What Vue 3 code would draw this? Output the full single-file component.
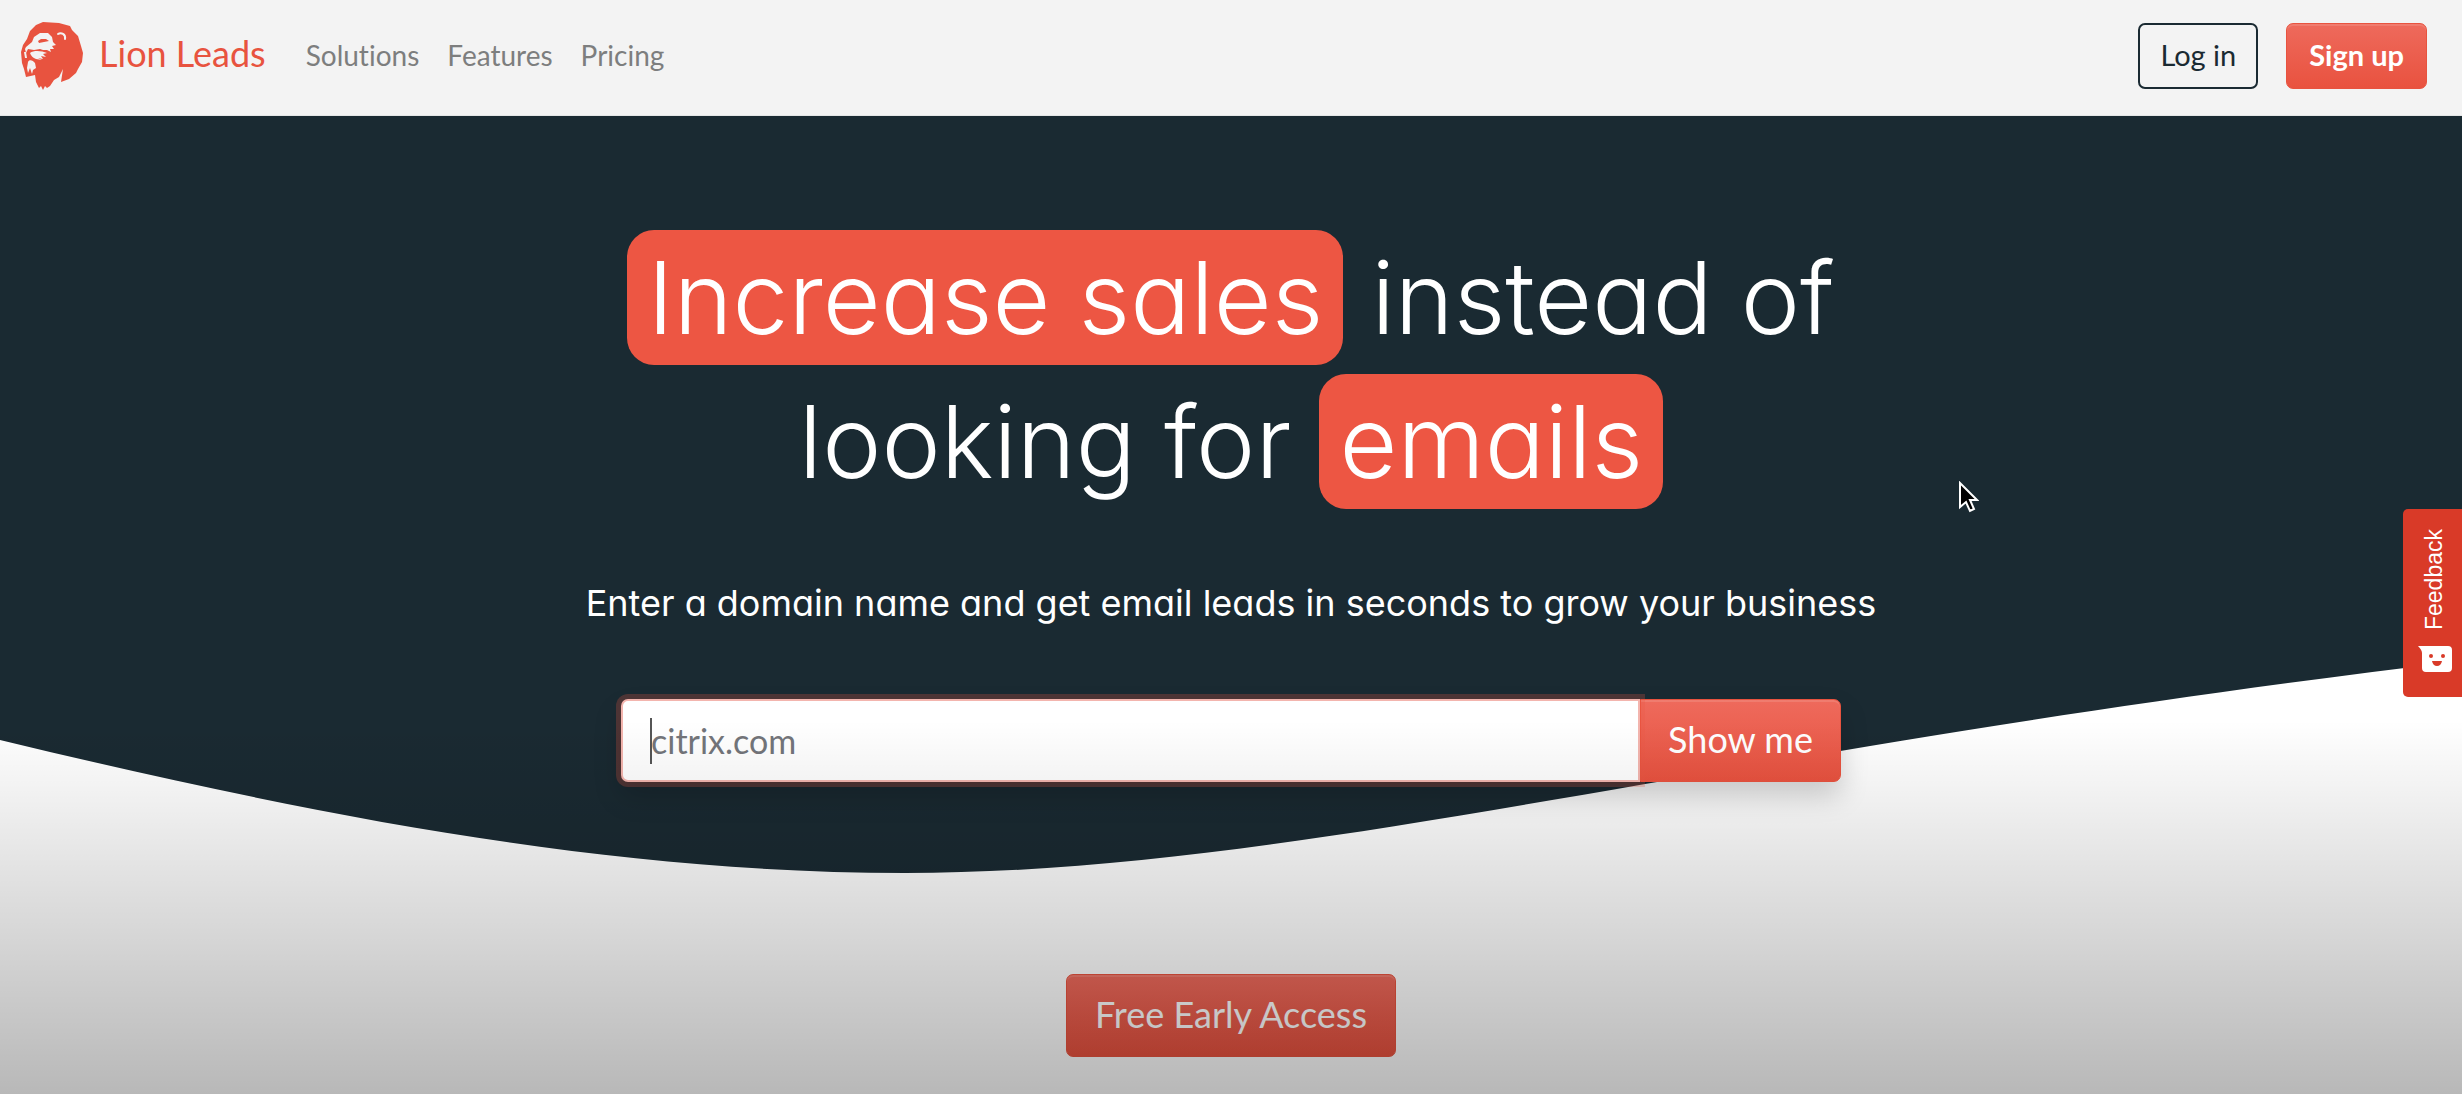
<script setup>
import { ref } from 'vue'

const domain = ref('')
const links = ['Solutions', 'Features', 'Pricing']
</script>

<template>
  <div class="page">
    <header class="navbar">
      <a class="brand" href="#">
        <svg class="brand-mark" viewBox="0 0 62 68" aria-hidden="true">
          <path fill="#e8533f" d="M15 3 22 0 38 1 49 4 51 8 57 14 60 24 62 31 61 40 57 47 55 51 48 57 40 60 42 47 38 55 33 58 29 64 26 66 24 64 22 68 20 64 18 66 15 60 14 53 5 55 3 47 1 41 0 30 2 23 6 17 9 9Z" />
          <path fill="#f3f3f3" d="M5 25 11 20 13 15 19 11 27 11 31 15 32 20 35 23 31 24 33 27 29 27 30 30 26 28 22 28 19 27 13 28 7 27 5 31 4 27Z" />
          <path fill="#f3f3f3" d="M9 31C13 28 21 29 26 31L22 32 25 35 20 34 22 37 17 36 21 38 15 37C12 36 10 34 9 31ZM3 30 5 30 6 36 4 36ZM7 40C8 37 12 38 14 41L15 46 12 48 11 52 9 46 7 51 6 46Z" />
          <path fill="#e8533f" d="M17 19 20 17 25 17 28 19 23 20 18 21Z" />
          <path fill="none" stroke="#f3f3f3" stroke-width="2" stroke-linecap="round" d="M37 12C40 10 45 12 44 17" />
        </svg>
        <span>Lion Leads</span>
      </a>
      <nav class="links">
        <a v-for="link in links" :key="link" href="#">{{ link }}</a>
      </nav>
      <div class="account">
        <button class="btn btn-outline" type="button">Log in</button>
        <button class="btn btn-red btn-strong" type="button">Sign up</button>
      </div>
    </header>

    <main class="hero">
      <svg class="wave" viewBox="0 0 2462 757" preserveAspectRatio="none" aria-hidden="true">
        <path fill="#1a2a32" d="M0 0H2462V545C1700 636 1300 757 905 757C600 757 300 696 0 624Z" />
      </svg>
      <h1>
        <mark>Increase sales</mark> instead of<br />
        looking for <mark>emails</mark>
      </h1>
      <p class="lead">Enter a domain name and get email leads in seconds to grow your business</p>
      <form class="search" @submit.prevent>
        <div class="field">
          <input v-model="domain" type="text" placeholder="citrix.com" aria-label="Domain name" />
          <span class="caret"></span>
        </div>
        <button class="btn-red show" type="submit">Show me</button>
      </form>
      <button class="btn-red early" type="button">Free Early Access</button>
    </main>

    <div class="shade"></div>

    <button class="feedback" type="button">
      <span>Feedback</span>
      <svg viewBox="0 0 34 26" aria-hidden="true">
        <path fill="#fff" d="M0 0H30Q34 0 34 4V22Q34 26 30 26H8Q4 26 4 22V7Q4 4 0 0Z" />
        <circle cx="13" cy="10" r="2" fill="#d93a28" />
        <circle cx="25" cy="10" r="2" fill="#d93a28" />
        <path fill="#d93a28" d="M14 15H24Q23 20 19 20T14 15Z" />
      </svg>
    </button>

    <svg class="pointer" viewBox="0 0 20 32" aria-hidden="true">
      <path fill="#000" stroke="#fff" stroke-width="2" d="M1 2V26L7 21L11 30L15 28L11 19H18Z" />
    </svg>
  </div>
</template>

<style>
body {
  margin: 0;
  background: #fff;
}
</style>

<style scoped>
.page {
  position: relative;
  display: flex;
  flex-direction: column;
  min-height: 100vh;
  overflow: hidden;
  font-family: Lato, "Noto Sans", sans-serif;
  font-variant-ligatures: none;
}

button,
input {
  font-family: inherit;
  margin: 0;
}

a {
  text-decoration: none;
}

.navbar {
  display: flex;
  align-items: center;
  box-sizing: border-box;
  height: 116px;
  padding: 0 35px 4px 21px;
  background: #f3f3f3;
  border-bottom: 1px solid #e4e6e6;
}

.brand {
  display: flex;
  align-items: center;
  gap: 16px;
  color: #e8533f;
  font-size: 36px;
  line-height: 48px;
}

.brand span {
  padding-bottom: 6px;
}

.brand-mark {
  width: 62px;
  height: 68px;
}

.links {
  display: flex;
  gap: 28px;
  margin-left: 40px;
  padding-bottom: 2px;
}

.links a {
  color: #7d7e7e;
  font-size: 28px;
  line-height: 40px;
}

.account {
  display: flex;
  gap: 28px;
  margin-left: auto;
}

.btn {
  height: 66px;
  padding: 0 20px 2px;
  border-radius: 7px;
  font-size: 29px;
}

.btn-outline {
  border: 2px solid #1a2a32;
  background: transparent;
  color: #1a2a32;
}

.btn-red {
  border: 1px solid #e8533f;
  background: linear-gradient(#ee6a5c, #e9523f);
  box-shadow: inset 0 2px 0 rgba(255, 255, 255, 0.12);
  color: #fff;
}

.btn-strong {
  padding: 0 22px 2px;
  font-weight: 700;
}

.hero {
  position: relative;
  display: flex;
  flex: 1;
  flex-direction: column;
  align-items: center;
  padding: 110px 20px 37px;
}

.wave {
  position: absolute;
  top: 0;
  left: 0;
  width: 100%;
  height: 757px;
}

h1,
.lead,
.search,
.early {
  position: relative;
}

h1 {
  margin: 0;
  color: #fff;
  font-family: Inter, sans-serif;
  font-feature-settings: "cv11";
  font-size: 100px;
  font-weight: 300;
  line-height: 144px;
  text-align: center;
}

mark {
  padding: 7px 20px;
  border-radius: 27px;
  background: #ed5643;
  color: #fff;
}

.lead {
  margin: 61px 0 68px;
  color: #fff;
  font-family: Inter, sans-serif;
  font-feature-settings: "cv11";
  font-size: 36px;
  line-height: 56px;
}

.search {
  display: flex;
  width: 100%;
  max-width: 1220px;
  height: 83px;
  border-radius: 7px;
  box-shadow: 0 14px 28px rgba(0, 0, 0, 0.18);
}

.field {
  position: relative;
  flex: 1;
}

.field input {
  box-sizing: border-box;
  width: 100%;
  height: 100%;
  padding: 0 28px;
  border: 2px solid #f3b5ae;
  border-radius: 7px 0 0 7px;
  outline: none;
  background: #fff;
  box-shadow: 0 0 0 5px rgba(237, 86, 67, 0.25);
  color: #1a2a32;
  font-size: 34px;
}

.field input::placeholder {
  color: #73757a;
  opacity: 1;
}

.caret {
  position: absolute;
  top: 19px;
  left: 29px;
  width: 2px;
  height: 46px;
  background: #555;
}

.show {
  width: 201px;
  padding: 0 0 4px;
  border-radius: 0 7px 7px 0;
  font-size: 36px;
}

.early {
  height: 83px;
  margin-top: auto;
  padding: 0 28px 4px;
  border-radius: 7px;
  font-size: 36px;
}

.shade {
  position: absolute;
  right: 0;
  bottom: 0;
  left: 0;
  height: 374px;
  background: linear-gradient(rgba(0, 0, 0, 0), rgba(0, 0, 0, 0.28));
  pointer-events: none;
}

.feedback {
  position: absolute;
  top: 509px;
  right: 0;
  display: flex;
  flex-direction: column;
  align-items: center;
  justify-content: space-between;
  width: 59px;
  height: 188px;
  padding: 20px 6px 25px 10px;
  border: 0;
  border-radius: 5px 0 0 5px;
  background: #d93a28;
  color: #fff;
  font-family: "Liberation Sans", Arial, sans-serif;
  font-size: 23px;
}

.feedback span {
  writing-mode: vertical-rl;
  transform: rotate(180deg);
}

.feedback svg {
  width: 34px;
  height: 26px;
}

.pointer {
  position: absolute;
  top: 481px;
  left: 1959px;
  width: 20px;
  height: 32px;
}
</style>
